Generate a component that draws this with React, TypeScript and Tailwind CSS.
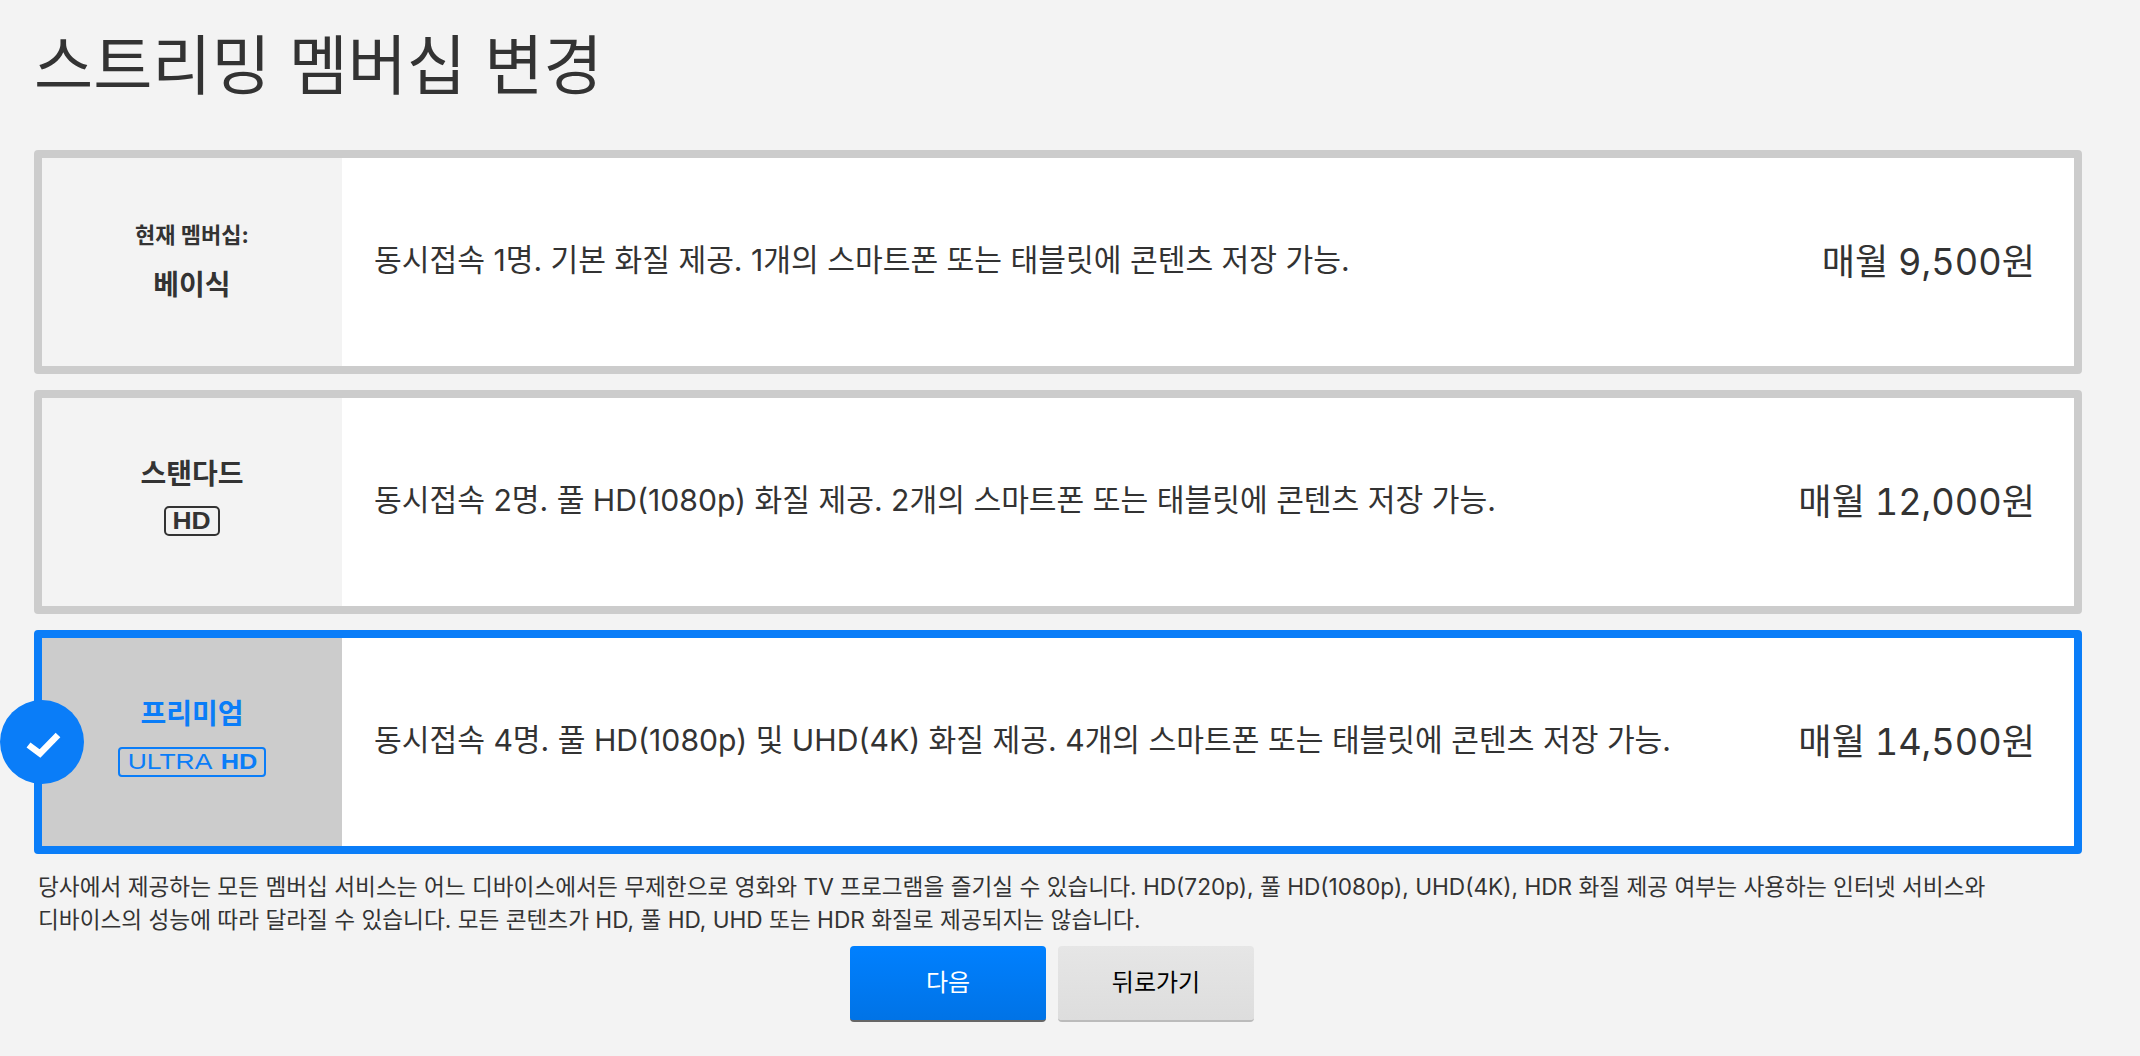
import React from 'react';

const FONT = "font-['Inter','Noto_Sans_CJK_KR',sans-serif]";

const plans = [
  {
    id: 'basic',
    desc: '동시접속 1명. 기본 화질 제공. 1개의 스마트폰 또는 태블릿에 콘텐츠 저장 가능.',
    price: '매월 9,500원',
  },
  {
    id: 'standard',
    desc: '동시접속 2명. 풀 HD(1080p) 화질 제공. 2개의 스마트폰 또는 태블릿에 콘텐츠 저장 가능.',
    price: '매월 12,000원',
  },
  {
    id: 'premium',
    desc: '동시접속 4명. 풀 HD(1080p) 및 UHD(4K) 화질 제공. 4개의 스마트폰 또는 태블릿에 콘텐츠 저장 가능.',
    price: '매월 14,500원',
  },
];

const PlanLabel: React.FC<{ id: string }> = ({ id }) => {
  if (id === 'basic') {
    return (
      <div className="flex flex-col items-center">
        <p className="text-[22px] leading-[28px] font-bold">현재 멤버십:</p>
        <p className="mt-[18px] text-[28px] leading-[36px] font-bold">베이식</p>
      </div>
    );
  }
  if (id === 'standard') {
    return (
      <div className="flex flex-col items-center pb-[12px]">
        <p className="text-[28px] leading-[36px] font-bold">스탠다드</p>
        <span className="mt-[14px] flex h-[30px] w-[56px] items-center justify-center rounded-[5px] border-2 border-[#333333] text-[#333333]">
          <span className="font-['Liberation_Sans',sans-serif] text-[23px] leading-none font-bold scale-x-[1.15]">HD</span>
        </span>
      </div>
    );
  }
  return (
    <div className="flex flex-col items-center pb-[12px]">
      <p className="text-[28px] leading-[36px] font-bold text-[#0a7df8]">프리미엄</p>
      <span className="mt-[15px] flex h-[30px] w-[148px] items-center justify-center rounded-[4px] border-2 border-[#0a7df8] text-[#0a7df8]">
        <span className="flex items-center gap-[8px] font-['Liberation_Sans',sans-serif] text-[22px] leading-none">
          <span className="w-[86px] scale-x-[1.2] text-center font-normal">ULTRA</span>
          <span className="w-[36px] scale-x-[1.15] text-center font-bold">HD</span>
        </span>
      </span>
    </div>
  );
};

const App: React.FC = () => {
  return (
    <div className={`${FONT} h-[1056px] overflow-hidden bg-[#f3f3f3] pl-[34px] text-[#333333]`}>
      <h1 className="h-[150px] pt-[23px] text-[64.3px] leading-[86px] font-normal">스트리밍 멤버십 변경</h1>

      <div className="flex w-[2048px] flex-col gap-[16px]">
        {plans.map((plan) => {
          const selected = plan.id === 'premium';
          return (
            <div
              key={plan.id}
              className={`relative flex h-[224px] rounded-[4px] border-[8px] bg-white ${selected ? 'border-[#0a7df8]' : 'border-[#cccccc]'}`}
            >
              <div
                className={`flex w-[300px] shrink-0 flex-col items-center justify-center ${selected ? 'bg-[#cccccc]' : 'bg-[#f3f3f3]'}`}
              >
                <PlanLabel id={plan.id} />
              </div>
              <div className="flex flex-1 items-center justify-between pr-[39px] pl-[32px]">
                <p className="pb-[4px] text-[30.15px] leading-[36px]">{plan.desc}</p>
                <p className="text-[36.2px] leading-[46px] tabular-nums">{plan.price}</p>
              </div>
              {selected && (
                <div className="absolute top-1/2 left-[-42px] flex h-[84px] w-[84px] -translate-y-1/2 items-center justify-center rounded-full bg-[#0a7df8]">
                  <svg className="overflow-visible" width="38" height="30" viewBox="0 0 38 30" fill="none">
                    <path d="M5.5 18 L17 26.5 L35 8" stroke="#ffffff" strokeWidth="6.5" />
                  </svg>
                </div>
              )}
            </div>
          );
        })}
      </div>

      <p className="mt-[16px] w-[2020px] pl-[4px] text-[22.65px] leading-[33px] break-keep">
        당사에서 제공하는 모든 멤버십 서비스는 어느 디바이스에서든 무제한으로 영화와 TV 프로그램을 즐기실 수 있습니다. HD(720p), 풀 HD(1080p), UHD(4K), HDR 화질 제공 여부는 사용하는 인터넷 서비스와 디바이스의 성능에 따라 달라질 수 있습니다. 모든 콘텐츠가 HD, 풀 HD, UHD 또는 HDR 화질로 제공되지는 않습니다.
      </p>

      <div className="mt-[10px] ml-[816px] flex gap-[12px]">
        <button className="h-[76px] w-[196px] rounded-[4px] border-b-2 border-[#666666] bg-gradient-to-b from-[#0080ff] to-[#0073e6] text-[24px] text-white">
          다음
        </button>
        <button className="h-[76px] w-[196px] rounded-[4px] border-b-2 border-[#bbbbbb] bg-gradient-to-b from-[#e6e6e6] to-[#dddddd] text-[24px] text-black">
          뒤로가기
        </button>
      </div>
    </div>
  );
};

export default App;
